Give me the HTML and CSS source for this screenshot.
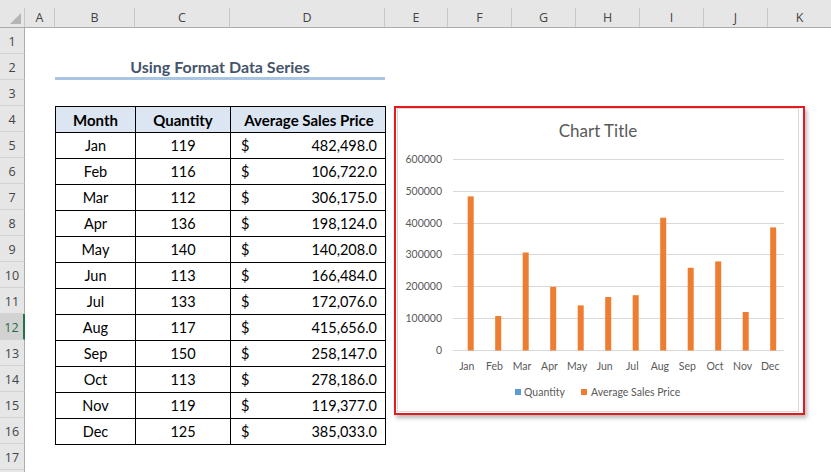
FILE: index.html
```html
<!DOCTYPE html>
<html>
<head>
<meta charset="utf-8">
<link rel="stylesheet" href="styles.css">
</head>
<body>
<div class="sheet">
  <div class="colhead">
    <div class="corner"><svg width="11" height="11" viewBox="0 0 11 11"><polygon points="11,0 11,11 0,11" fill="#b5b5b5"/></svg></div>
    <div class="ch w-a">A</div>
    <div class="ch w-b">B</div>
    <div class="ch w-c">C</div>
    <div class="ch w-d">D</div>
    <div class="ch w-e">E</div>
    <div class="ch w-f">F</div>
    <div class="ch w-f">G</div>
    <div class="ch w-f">H</div>
    <div class="ch w-f">I</div>
    <div class="ch w-f">J</div>
    <div class="ch w-f">K</div>
  </div>

  <div class="row"><div class="rh">1</div></div>
  <div class="row"><div class="rh">2</div><div class="gap"></div><div class="title">Using Format Data Series</div></div>
  <div class="row"><div class="rh">3</div></div>
  <div class="row"><div class="rh">4</div><div class="gap"></div>
    <div class="c b hd">Month</div><div class="c q hd">Quantity</div><div class="c p hd ctr">Average Sales Price</div></div>
  <div class="row"><div class="rh">5</div><div class="gap"></div>
    <div class="c b">Jan</div><div class="c q">119</div><div class="c p"><span>$</span><span>482,498.0</span></div></div>
  <div class="row"><div class="rh">6</div><div class="gap"></div>
    <div class="c b">Feb</div><div class="c q">116</div><div class="c p"><span>$</span><span>106,722.0</span></div></div>
  <div class="row"><div class="rh">7</div><div class="gap"></div>
    <div class="c b">Mar</div><div class="c q">112</div><div class="c p"><span>$</span><span>306,175.0</span></div></div>
  <div class="row"><div class="rh">8</div><div class="gap"></div>
    <div class="c b">Apr</div><div class="c q">136</div><div class="c p"><span>$</span><span>198,124.0</span></div></div>
  <div class="row"><div class="rh">9</div><div class="gap"></div>
    <div class="c b">May</div><div class="c q">140</div><div class="c p"><span>$</span><span>140,208.0</span></div></div>
  <div class="row"><div class="rh">10</div><div class="gap"></div>
    <div class="c b">Jun</div><div class="c q">113</div><div class="c p"><span>$</span><span>166,484.0</span></div></div>
  <div class="row"><div class="rh">11</div><div class="gap"></div>
    <div class="c b">Jul</div><div class="c q">133</div><div class="c p"><span>$</span><span>172,076.0</span></div></div>
  <div class="row"><div class="rh sel">12</div><div class="gap"></div>
    <div class="c b">Aug</div><div class="c q">117</div><div class="c p"><span>$</span><span>415,656.0</span></div></div>
  <div class="row"><div class="rh">13</div><div class="gap"></div>
    <div class="c b">Sep</div><div class="c q">150</div><div class="c p"><span>$</span><span>258,147.0</span></div></div>
  <div class="row"><div class="rh">14</div><div class="gap"></div>
    <div class="c b">Oct</div><div class="c q">113</div><div class="c p"><span>$</span><span>278,186.0</span></div></div>
  <div class="row"><div class="rh">15</div><div class="gap"></div>
    <div class="c b">Nov</div><div class="c q">119</div><div class="c p"><span>$</span><span>119,377.0</span></div></div>
  <div class="row"><div class="rh">16</div><div class="gap"></div>
    <div class="c b last">Dec</div><div class="c q last">125</div><div class="c p last"><span>$</span><span>385,033.0</span></div></div>
  <div class="row"><div class="rh">17</div></div>
  <div class="row"><div class="rh"></div></div>

  <div class="chart">
    <svg class="chart-svg" width="407" height="305" viewBox="0 0 407 305">
      <rect x="1.5" y="0.5" width="401" height="303" fill="#fff" stroke="#d9d9d9"/>
      <text class="ctitle" x="202" y="29" text-anchor="middle">Chart Title</text>
      <g stroke="#d9d9d9" stroke-width="1">
        <line x1="57" y1="51.5" x2="388" y2="51.5"/>
        <line x1="57" y1="83.5" x2="388" y2="83.5"/>
        <line x1="57" y1="115.5" x2="388" y2="115.5"/>
        <line x1="57" y1="146.5" x2="388" y2="146.5"/>
        <line x1="57" y1="178.5" x2="388" y2="178.5"/>
        <line x1="57" y1="210.5" x2="388" y2="210.5"/>
        <line x1="57" y1="242.5" x2="388" y2="242.5"/>
      </g>
      <g class="axis" text-anchor="end">
        <text x="46" y="55">600000</text>
        <text x="46" y="87">500000</text>
        <text x="46" y="119">400000</text>
        <text x="46" y="150">300000</text>
        <text x="46" y="182">200000</text>
        <text x="46" y="214">100000</text>
        <text x="46" y="246">0</text>
      </g>
      <g fill="#ed7d31">
        <rect x="71.7" y="88.4" width="6" height="154.1"/>
        <rect x="99.2" y="208.0" width="6" height="34.5"/>
        <rect x="126.7" y="144.5" width="6" height="98"/>
        <rect x="154.2" y="178.9" width="6" height="63.6"/>
        <rect x="181.7" y="197.4" width="6" height="45.1"/>
        <rect x="209.2" y="189.0" width="6" height="53.5"/>
        <rect x="236.7" y="187.2" width="6" height="55.3"/>
        <rect x="264.2" y="109.7" width="6" height="132.8"/>
        <rect x="291.7" y="159.8" width="6" height="82.7"/>
        <rect x="319.2" y="153.4" width="6" height="89.1"/>
        <rect x="346.7" y="204.0" width="6" height="38.5"/>
        <rect x="374.2" y="119.4" width="6" height="123.1"/>
      </g>
      <g class="axis" text-anchor="middle">
        <text x="70.8" y="262">Jan</text>
        <text x="98.4" y="262">Feb</text>
        <text x="126.0" y="262">Mar</text>
        <text x="153.5" y="262">Apr</text>
        <text x="181.1" y="262">May</text>
        <text x="208.7" y="262">Jun</text>
        <text x="236.3" y="262">Jul</text>
        <text x="263.9" y="262">Aug</text>
        <text x="291.4" y="262">Sep</text>
        <text x="319.0" y="262">Oct</text>
        <text x="346.6" y="262">Nov</text>
        <text x="374.2" y="262">Dec</text>
      </g>
      <rect x="119" y="281" width="6" height="6" fill="#5b9bd5"/>
      <text class="axis" x="128" y="288">Quantity</text>
      <rect x="185" y="281" width="6" height="6" fill="#ed7d31"/>
      <text class="axis" x="195" y="288">Average Sales Price</text>
    </svg>
  </div>
</div>
</body>
</html>
```
FILE: styles.css
```css
* { box-sizing: border-box; }
body {
  margin: 0;
  background: #fff;
  font-family: Lato, "Open Sans", sans-serif;
}
.sheet {
  position: relative;
  width: 831px;
  height: 472px;
  overflow: hidden;
  background: #fff;
}
.colhead {
  display: flex;
  height: 28px;
  padding-top: 8px;
  background: #e6e6e6;
  border-bottom: 1px solid #ababab;
}
.corner {
  width: 25px;
  flex: none;
  display: flex;
  align-items: flex-end;
  justify-content: flex-end;
  padding: 0 3px 3px 0;
  border-right: 1px solid #c8c8c8;
}
.corner svg { display: block; }
.ch {
  flex: none;
  height: 19px;
  border-right: 1px solid #c8c8c8;
  text-align: center;
  font-family: "Open Sans", sans-serif;
  font-size: 12.5px;
  line-height: 19px;
  color: #444;
}
.w-a { width: 30px; }
.w-b { width: 80px; }
.w-c { width: 95px; }
.w-d { width: 155px; }
.w-e { width: 63px; }
.w-f { width: 64px; }

.row {
  display: flex;
  height: 26px;
}
.rh {
  width: 25px;
  flex: none;
  background: #e6e6e6;
  border-right: 1px solid #ababab;
  border-bottom: 1px solid #d2d2d2;
  text-align: center;
  font-family: "Open Sans", sans-serif;
  font-size: 12.5px;
  line-height: 27px;
  color: #444;
}
.rh.sel {
  background: #d2d2d2;
  color: #1e6b40;
  border-right: 2px solid #217346;
}
.gap {
  width: 30px;
  flex: none;
}
.title {
  width: 330px;
  flex: none;
  border-bottom: 3px solid #aac5e4;
  padding-top: 3px;
  text-align: center;
  font-weight: 700;
  font-size: 16px;
  line-height: 20px;
  color: #44546a;
}
.c {
  flex: none;
  height: 26px;
  border-left: 1px solid #000;
  border-top: 1px solid #000;
  padding-top: 2px;
  font-size: 14.5px;
  line-height: 22px;
  color: #000;
}
.c.last {
  height: 27px;
  border-bottom: 1px solid #000;
}
.b { width: 80px; text-align: center; }
.q { width: 95px; text-align: center; }
.p {
  width: 156px;
  border-right: 1px solid #000;
  display: flex;
  justify-content: space-between;
  padding-left: 10px;
  padding-right: 8px;
}
.hd {
  background: #dce6f2;
  font-weight: 700;
  font-size: 15px;
}
.p.ctr { justify-content: center; padding-left: 2px; padding-right: 0; }

.chart {
  position: absolute;
  left: 394px;
  top: 106px;
  width: 411px;
  height: 309px;
  border: 2px solid #e01b22;
  background: #fff;
  box-shadow: 2px 3px 4px rgba(0, 0, 0, 0.28);
}
.chart-svg { display: block; }
.ctitle {
  font-family: Lato, sans-serif;
  font-size: 17px;
  fill: #595959;
}
.axis {
  font-family: Lato, sans-serif;
  font-size: 10.5px;
  fill: #595959;
}
```
